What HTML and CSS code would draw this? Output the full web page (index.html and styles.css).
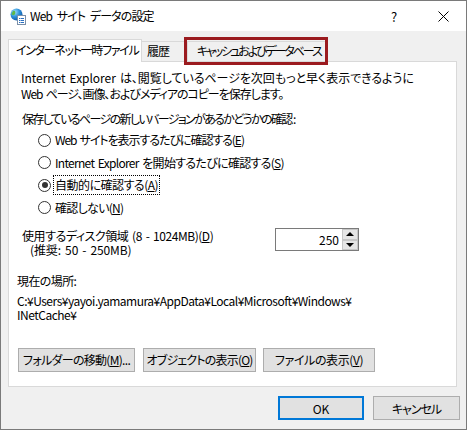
FILE: index.html
```html
<!DOCTYPE html>
<html lang="ja">
<head>
<meta charset="utf-8">
<title>Web サイト データの設定</title>
<link rel="stylesheet" href="styles.css">
</head>
<body>
<div class="window">
  <div class="titlebar">
    <svg class="app-icon" width="16" height="17" viewBox="0 0 16 17">
      <defs>
        <radialGradient id="g" cx="0.35" cy="0.3" r="0.8">
          <stop offset="0" stop-color="#9fe0ff"/>
          <stop offset="0.5" stop-color="#2a8fd8"/>
          <stop offset="1" stop-color="#0b4f9e"/>
        </radialGradient>
      </defs>
      <circle cx="6.5" cy="6.5" r="6" fill="url(#g)"/>
      <path d="M3 3 C5 2 6 4 5 6 C4 8 2 7 1.5 6 Z" fill="#5cb848"/>
      <path d="M7 8 C9 7 11 8 10.5 10 C9 12 7 11 7 8 Z" fill="#5cb848"/>
      <rect x="7.5" y="7.5" width="8" height="9" fill="#fff" stroke="#7a8fa8" stroke-width="1"/>
      <rect x="9" y="10" width="1.5" height="1" fill="#2a6fc0"/>
      <rect x="11" y="10" width="3" height="1" fill="#2a6fc0"/>
      <rect x="9" y="12" width="1.5" height="1" fill="#2a6fc0"/>
      <rect x="11" y="12" width="3" height="1" fill="#2a6fc0"/>
      <rect x="9" y="14" width="1.5" height="1" fill="#2a6fc0"/>
      <rect x="11" y="14" width="3" height="1" fill="#2a6fc0"/>
    </svg>
    <span class="title">Web サイト データの設定</span>
    <span class="help">?</span>
    <span class="close">
      <svg width="11" height="11" viewBox="0 0 11 11"><path d="M0.5 0.5 L10.5 10.5 M10.5 0.5 L0.5 10.5" stroke="#000" stroke-width="1"/></svg>
    </span>
  </div>
  <div class="body">
    <div class="tabs">
      <div class="tab active">インターネット一時ファイル</div>
      <div class="tab second">履歴</div>
      <div class="tab third">キャッシュおよびデータベース</div>
      <div class="highlight"></div>
    </div>
    <div class="panel">
      <p class="intro"><span class="l1">Internet Explorer は、閲覧しているページを次回もっと早く表示できるように</span><span class="l2">Web ページ、画像、およびメディアのコピーを保存します。</span></p>
      <p class="question">保存しているページの新しいバージョンがあるかどうかの確認<span class="colon">:</span></p>
      <div class="radios">
        <div class="radio"><span class="circle"></span><span class="label r1">Web サイトを表示するたびに確認する(<u>E</u>)</span></div>
        <div class="radio"><span class="circle"></span><span class="label r2">Internet Explorer を開始するたびに確認する(<u>S</u>)</span></div>
        <div class="radio"><span class="circle checked"></span><span class="label r3 focused">自動的に確認する(<u>A</u>)</span></div>
        <div class="radio"><span class="circle"></span><span class="label r4">確認しない(<u>N</u>)</span></div>
      </div>
      <div class="disk">
        <div class="disk-label">
          <div class="main">使用するディスク領域 (8 - 1024MB)(<u>D</u>)</div>
          <div class="sub">(推奨: 50 - 250MB)</div>
        </div>
        <div class="spinner">
          <div class="spin-value">250</div>
          <div class="spin-buttons">
            <div class="spin-btn"><span class="tri up"></span></div>
            <div class="spin-btn"><span class="tri down"></span></div>
          </div>
        </div>
      </div>
      <p class="loc-label">現在の場所:</p>
      <p class="path">C:¥Users¥yayoi.yamamura¥AppData¥Local¥Microsoft¥Windows¥<br>INetCache¥</p>
      <div class="btn-row">
        <div class="btn b1">フォルダーの移動(<u>M</u>)...</div>
        <div class="btn b2">オブジェクトの表示(<u>O</u>)</div>
        <div class="btn b3">ファイルの表示(<u>V</u>)</div>
      </div>
    </div>
    <div class="footer">
      <div class="btn ok">OK</div>
      <div class="btn cancel">キャンセル</div>
    </div>
  </div>
</div>
</body>
</html>
```
FILE: styles.css
```css
* { box-sizing: border-box; }
html, body { margin: 0; padding: 0; background: #fff; }
body {
  font-family: "Noto Sans CJK JP", "Noto Sans", sans-serif;
  font-size: 12px;
  color: #000;
  font-feature-settings: "palt";
  word-spacing: 1.5px;
}
p { margin: 0; }
u { text-decoration: underline; text-underline-offset: 1px; }

.window {
  width: 467px;
  height: 430px;
  border: 1px solid #7a7a7a;
  display: flex;
  flex-direction: column;
}

.titlebar {
  height: 30px;
  background: #fff;
  display: flex;
  align-items: center;
  position: relative;
}
.app-icon { margin-left: 9px; margin-top: 1px; }
.title { margin-left: 4px; line-height: 16px; letter-spacing: -0.9px; word-spacing: 3px; }
.help { margin-left: auto; width: 10px; text-align: center; margin-right: 39px; font-size: 13px; }
.close { width: 11px; height: 11px; margin-right: 17px; display: flex; }

.body {
  flex: 1;
  background: #f0f0f0;
  padding-top: 6px;
}

.tabs {
  height: 24px;
  padding-left: 7px;
  display: flex;
  align-items: flex-end;
  position: relative;
}
.tab {
  height: 20px;
  border: 1px solid #d9d9d9;
  border-bottom: none;
  background: #f0f0f0;
  line-height: 18px;
  white-space: nowrap;
}
.tab.active {
  width: 134px;
  height: 23px;
  margin-bottom: -1px;
  background: #fff;
  position: relative;
  z-index: 1;
  padding-left: 7px;
  line-height: 20px;
  letter-spacing: -1.3px;
}
.tab.second { width: 43px; border-left: none; padding-left: 5px; letter-spacing: -1px; }
.tab.third { width: 139px; margin-left: 2px; padding-left: 9px; letter-spacing: -2.1px; }
.highlight {
  position: absolute;
  left: 183px;
  top: 0;
  width: 144px;
  height: 28px;
  border: 3px solid #9b1b1f;
  z-index: 2;
}

.panel {
  width: 449px;
  height: 326px;
  margin-left: 7px;
  background: #fff;
  border: 1px solid #d9d9d9;
  padding: 8px 0 0 12px;
  line-height: 16px;
}

.intro .l1, .intro .l2 { display: block; white-space: nowrap; }
.intro .l1 { letter-spacing: -0.05px; }
.intro .l2 { letter-spacing: -1.05px; }
.question { margin-top: 9px; padding-left: 1px; letter-spacing: -1.65px; }
.question .colon { letter-spacing: 0; margin-left: 1.5px; }

.radios { margin-top: 2px; padding-left: 17px; }
.radio {
  height: 22.5px;
  display: flex;
  align-items: center;
}
.circle {
  width: 13px;
  height: 13px;
  border: 1px solid #333;
  border-radius: 50%;
  background: #fff;
  position: relative;
  flex: none;
}
.circle.checked::after {
  content: "";
  position: absolute;
  left: 2.5px;
  top: 2.5px;
  width: 6px;
  height: 6px;
  border-radius: 50%;
  background: #333;
}
.radio .label { margin-left: 2px; padding: 1px 1px; border: 1px dotted transparent; white-space: nowrap; }
.radio .label.focused { border-color: #000; }
.r1 { letter-spacing: -1.05px; }
.r2 { letter-spacing: -0.7px; }
.r3 { letter-spacing: -0.5px; }
.r4 { letter-spacing: -0.7px; }

.disk {
  margin-top: 9px;
  display: flex;
  padding-left: 1px;
}
.disk-label { width: 253px; padding-top: 1px; line-height: 13.5px; }
.disk-label .main { letter-spacing: -0.45px; }
.disk-label .sub { padding-left: 8px; letter-spacing: -0.1px; }
.spinner {
  width: 84px;
  height: 23px;
  border: 1px solid #7a7a7a;
  display: flex;
}
.spin-value {
  flex: 1;
  text-align: right;
  padding-right: 3px;
  line-height: 21px;
}
.spin-buttons { width: 16px; display: flex; flex-direction: column; }
.spin-btn {
  flex: 1;
  background: #e5e5e5;
  border: 1px solid #c6c6c6;
  display: flex;
  align-items: center;
  justify-content: center;
}
.tri { width: 0; height: 0; border-left: 4px solid transparent; border-right: 4px solid transparent; }
.tri.up { border-bottom: 4px solid #000; }
.tri.down { border-top: 4px solid #000; }

.loc-label { margin-top: 17px; margin-left: -4px; letter-spacing: -0.6px; }
.path { margin-top: 5px; margin-left: -4px; line-height: 14px; letter-spacing: -0.5px; white-space: nowrap; }

.btn-row {
  margin-top: 26px;
  margin-left: -3px;
  display: flex;
}
.btn {
  height: 24px;
  background: #e1e1e1;
  border: 1px solid #adadad;
  display: flex;
  align-items: center;
  justify-content: center;
  white-space: nowrap;
}
.b1 { width: 117px; letter-spacing: -0.7px; }
.b2 { width: 113px; margin-left: 8px; letter-spacing: -0.8px; }
.b3 { width: 112px; margin-left: 7px; letter-spacing: -0.4px; }

.footer {
  display: flex;
  justify-content: flex-end;
  padding: 9px 6px 0 0;
}
.ok { width: 86px; border: 2px solid #0078d7; }
.cancel { width: 87px; margin-left: 9px; letter-spacing: -1px; }
```
